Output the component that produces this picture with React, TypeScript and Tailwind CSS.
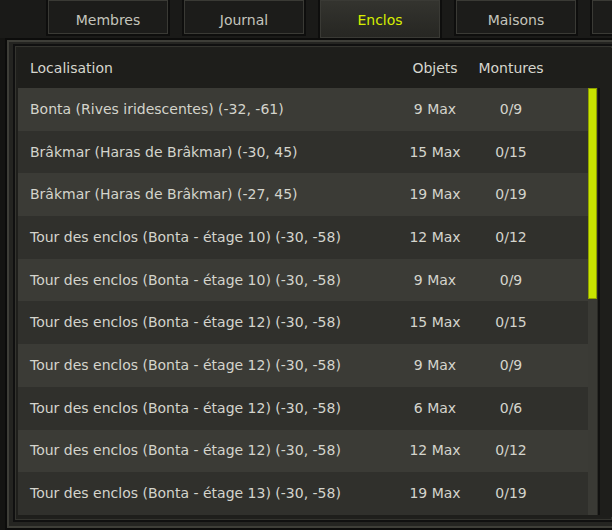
import React from "react";

const rows: [string, string, string][] = [
  ["Bonta (Rives iridescentes) (-32, -61)", "9 Max", "0/9"],
  ["Brâkmar (Haras de Brâkmar) (-30, 45)", "15 Max", "0/15"],
  ["Brâkmar (Haras de Brâkmar) (-27, 45)", "19 Max", "0/19"],
  ["Tour des enclos (Bonta - étage 10) (-30, -58)", "12 Max", "0/12"],
  ["Tour des enclos (Bonta - étage 10) (-30, -58)", "9 Max", "0/9"],
  ["Tour des enclos (Bonta - étage 12) (-30, -58)", "15 Max", "0/15"],
  ["Tour des enclos (Bonta - étage 12) (-30, -58)", "9 Max", "0/9"],
  ["Tour des enclos (Bonta - étage 12) (-30, -58)", "6 Max", "0/6"],
  ["Tour des enclos (Bonta - étage 12) (-30, -58)", "12 Max", "0/12"],
  ["Tour des enclos (Bonta - étage 13) (-30, -58)", "19 Max", "0/19"],
];

function Tab({ label, active }: { label: string; active?: boolean }) {
  return (
    <div
      className={
        "w-[124px] shrink-0 flex items-center justify-center border-2 border-t-0 border-[#0e0e0d] shadow-[inset_0_0_0_1px_#3a3a35] " +
        (active
          ? "h-[40px] bg-gradient-to-b from-[#34342f] to-[#262622] text-[#d6ee00] pb-[4px]"
          : "h-[36px] bg-[#1c1c1a] text-[#c4c4bc]")
      }
    >
      <span className="text-[14px] mt-[6px]">{label}</span>
    </div>
  );
}

export default function App() {
  return (
    <div
      className="w-[612px] h-[530px] overflow-hidden bg-[#141412] flex flex-col"
      style={{ fontFamily: '"DejaVu Sans", Verdana, sans-serif' }}
    >
      <div className="flex gap-[12px] pl-[46px] h-[38px] items-start bg-[#1a1a18]">
        <Tab label="Membres" />
        <Tab label="Journal" />
        <Tab label="Enclos" active />
        <Tab label="Maisons" />
        <Tab label="" />
      </div>
      <div className="flex-1 ml-[5px] mr-[-10px] border-2 border-[#0c0c0b] bg-[#242421] shadow-[inset_0_0_0_2px_#3e3e38] px-[6px] pt-[4px] pb-[6px] flex flex-col">
        <div className="flex-1 border-2 border-[#101010] shadow-[inset_0_0_0_1px_#34342f] bg-[#1f1f1c] px-[3px] pt-[2px] pb-[3px] flex flex-col">
          <div className="flex-1 flex flex-col bg-[#1e1e1b] mr-[-30px]">
            <div className="h-[40px] shrink-0 flex items-center text-[14px] text-[#d6d6ce] bg-[#1e1e1b]">
              <div className="w-[381px] pl-[12px]">Localisation</div>
              <div className="w-[72px] text-center">Objets</div>
              <div className="w-[80px] text-center">Montures</div>
            </div>
            <div className="flex">
              <div className="w-[570px] flex flex-col">
                {rows.map((r, i) => (
                  <div
                    key={i}
                    className={
                      "h-[42.7px] shrink-0 flex items-center text-[14px] text-[#d4d4cc] " +
                      (i % 2 === 0 ? "bg-[#3b3b36]" : "bg-[#30302c]")
                    }
                  >
                    <div className="w-[381px] pl-[12px] whitespace-nowrap">{r[0]}</div>
                    <div className="w-[72px] text-center">{r[1]}</div>
                    <div className="w-[80px] text-center">{r[2]}</div>
                  </div>
                ))}
              </div>
              <div className="w-[10px] bg-[#3a3a35] h-[427px] border-r border-[#2a2a26]">
                <div className="h-[211px] bg-[#c8e400] border border-[#8ea000]" />
              </div>
              <div className="w-[2px] bg-[#111110] h-[427px]" />
            </div>
          </div>
        </div>
      </div>
    </div>
  );
}
